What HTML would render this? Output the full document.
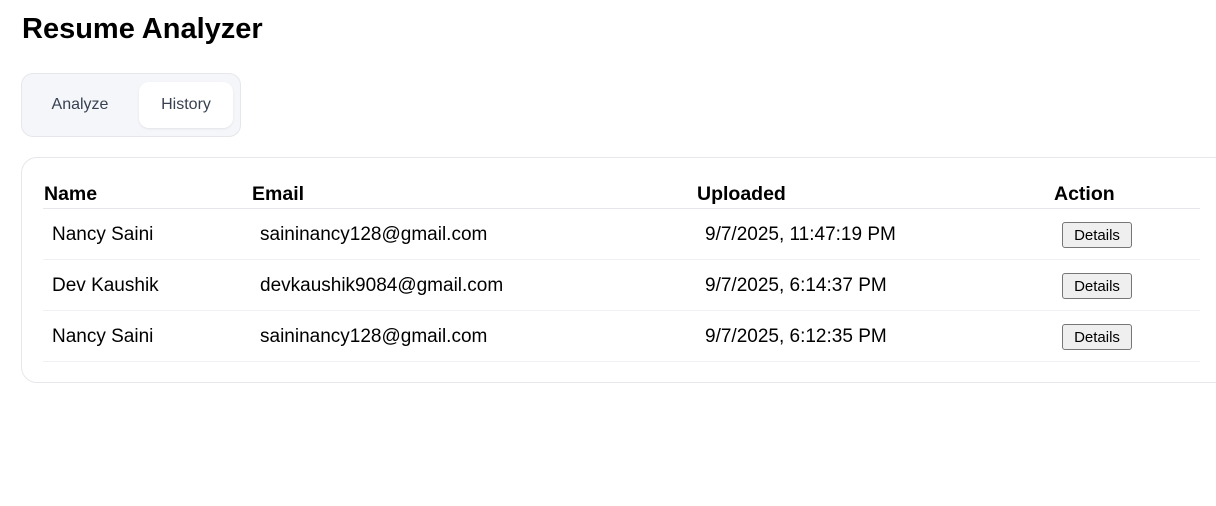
<!DOCTYPE html>
<html><head><meta charset="utf-8"><style>
*{box-sizing:border-box}
body{margin:0;width:1216px;height:506px;overflow:hidden;background:#fff;font-family:"Liberation Sans",sans-serif;color:#000;position:relative}
h1{position:absolute;left:22px;top:11px;margin:0;font-size:29px;font-weight:bold;line-height:36px}
.tabs{position:absolute;left:21px;top:73px;width:220px;height:64px;background:#f5f6fa;border:1px solid #e5e7eb;border-radius:12px}
.tab{position:absolute;top:8px;height:46px;line-height:46px;font-size:16px;color:#374151;text-align:center}
.t1{left:8px;width:100px}
.t2{left:117px;width:94px;background:#fff;border-radius:10px;box-shadow:0 1px 2px rgba(0,0,0,.08)}
.card{position:absolute;left:21px;top:157px;width:1210px;height:226px;border:1px solid #e5e7eb;border-radius:16px;background:#fff}
table{position:absolute;left:21px;top:24px;width:1157px;border-collapse:collapse;table-layout:fixed;font-size:19px}
th{text-align:left;font-weight:bold;font-size:19.5px;padding:0 0 2px 1px;height:26px;vertical-align:bottom;border-bottom:1px solid #e5e7eb}
td{height:51px;padding:3px 0 0 9px;border-bottom:1px solid #eef0f3;vertical-align:middle}
button{font-family:"Liberation Sans",sans-serif;font-size:15px;background:#efefef;border:1px solid #767676;border-radius:3px;padding:0;height:26px;width:70px;color:#000}
</style></head><body>
<h1>Resume Analyzer</h1>
<div class="tabs"><div class="tab t1">Analyze</div><div class="tab t2">History</div></div>
<div class="card">
<table>
<colgroup><col style="width:208px"><col style="width:445px"><col style="width:357px"><col style="width:147px"></colgroup>
<tr><th>Name</th><th>Email</th><th>Uploaded</th><th>Action</th></tr>
<tr><td>Nancy Saini</td><td>saininancy128@gmail.com</td><td>9/7/2025, 11:47:19 PM</td><td><button>Details</button></td></tr>
<tr><td>Dev Kaushik</td><td>devkaushik9084@gmail.com</td><td>9/7/2025, 6:14:37 PM</td><td><button>Details</button></td></tr>
<tr><td>Nancy Saini</td><td>saininancy128@gmail.com</td><td>9/7/2025, 6:12:35 PM</td><td><button>Details</button></td></tr>
</table>
</div>
</body></html>
